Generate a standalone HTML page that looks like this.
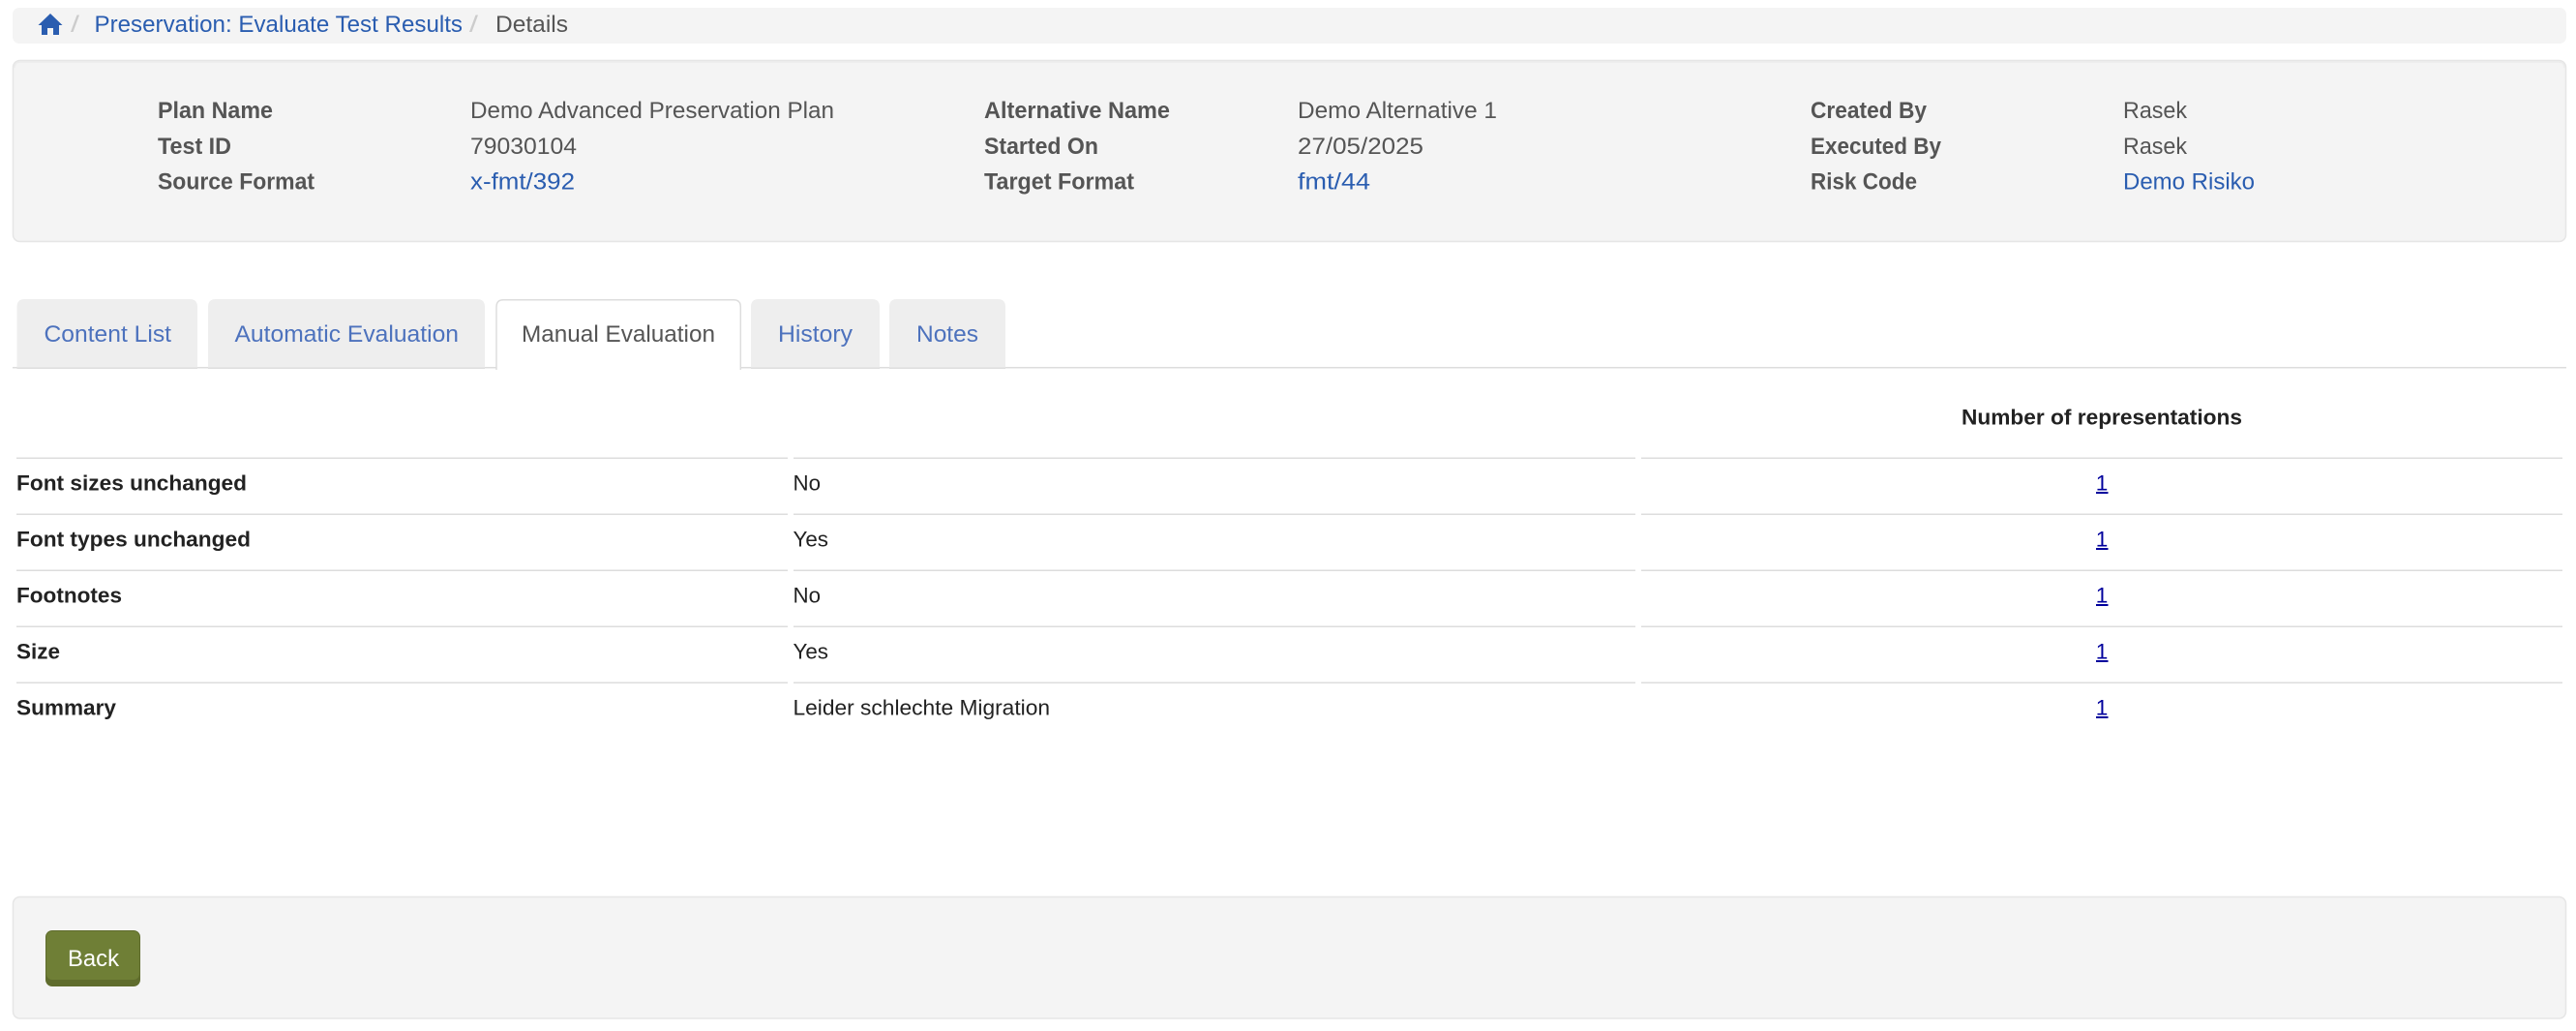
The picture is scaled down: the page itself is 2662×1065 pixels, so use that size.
<!DOCTYPE html>
<html lang="en">
<head>
<meta charset="utf-8">
<title>Details</title>
<style>
html,body{margin:0;padding:0;background:#fff;width:2662px;height:1065px;overflow:hidden}
svg{display:block;position:absolute;left:0;top:0}
text{font-family:"Liberation Sans",Arial,sans-serif;font-size:24.5px;white-space:pre}
.l{font-weight:700;fill:#555}
.v{fill:#555}
.a{fill:#2a5db0}
.t{fill:#4d72bd}
.th{font-size:22.6px;fill:#222;font-weight:700}
.td{font-size:22.6px;fill:#222}
.n{font-size:22.6px;fill:#00009c}
</style>
</head>
<body>
<svg width="2662" height="1065" viewBox="0 0 2662 1065" xmlns="http://www.w3.org/2000/svg">
<!-- breadcrumb -->
<rect x="13" y="8" width="2639" height="37" rx="7" fill="#f4f4f4"/>
<path d="M52 14 L64.5 26 L61 26 L61 36 L55 36 L55 29 L49 29 L49 36 L43 36 L43 26 L39.5 26 Z" fill="#2a5db0"/>
<text x="73" y="33" fill="#ccc" textLength="9" lengthAdjust="spacingAndGlyphs">/</text>
<text class="a" x="97.5" y="33" textLength="380.5" lengthAdjust="spacingAndGlyphs">Preservation: Evaluate Test Results</text>
<text x="485" y="33" fill="#ccc" textLength="9" lengthAdjust="spacingAndGlyphs">/</text>
<text class="v" x="512" y="33" textLength="75" lengthAdjust="spacingAndGlyphs">Details</text>

<!-- info panel -->
<rect x="13.5" y="62.5" width="2638" height="187" rx="7" fill="#f4f4f4" stroke="#e6e6e6" stroke-width="1.5"/>
<path d="M15 70 Q15 64 21 64 L2644 64 Q2650 64 2650 70" fill="none" stroke="#ececec" stroke-width="1.5"/>

<text class="l" x="163" y="122" textLength="119" lengthAdjust="spacingAndGlyphs">Plan Name</text>
<text class="l" x="163" y="159" textLength="76" lengthAdjust="spacingAndGlyphs">Test ID</text>
<text class="l" x="163" y="195.5" textLength="162" lengthAdjust="spacingAndGlyphs">Source Format</text>
<text class="v" x="486" y="122" textLength="376" lengthAdjust="spacingAndGlyphs">Demo Advanced Preservation Plan</text>
<text class="v" x="486" y="159" textLength="110" lengthAdjust="spacingAndGlyphs">79030104</text>
<text class="a" x="486" y="195.5" textLength="108" lengthAdjust="spacingAndGlyphs">x-fmt/392</text>

<text class="l" x="1017" y="122" textLength="192" lengthAdjust="spacingAndGlyphs">Alternative Name</text>
<text class="l" x="1017" y="159" textLength="118" lengthAdjust="spacingAndGlyphs">Started On</text>
<text class="l" x="1017" y="195.5" textLength="155" lengthAdjust="spacingAndGlyphs">Target Format</text>
<text class="v" x="1341" y="122" textLength="206" lengthAdjust="spacingAndGlyphs">Demo Alternative 1</text>
<text class="v" x="1341" y="159" textLength="130" lengthAdjust="spacingAndGlyphs">27/05/2025</text>
<text class="a" x="1341" y="195.5" textLength="75" lengthAdjust="spacingAndGlyphs">fmt/44</text>

<text class="l" x="1871" y="122" textLength="120" lengthAdjust="spacingAndGlyphs">Created By</text>
<text class="l" x="1871" y="159" textLength="135" lengthAdjust="spacingAndGlyphs">Executed By</text>
<text class="l" x="1871" y="195.5" textLength="110" lengthAdjust="spacingAndGlyphs">Risk Code</text>
<text class="v" x="2194" y="122" textLength="66" lengthAdjust="spacingAndGlyphs">Rasek</text>
<text class="v" x="2194" y="159" textLength="66" lengthAdjust="spacingAndGlyphs">Rasek</text>
<text class="a" x="2194" y="195.5" textLength="136" lengthAdjust="spacingAndGlyphs">Demo Risiko</text>

<!-- tabs -->
<rect x="13" y="379" width="2639" height="1.5" fill="#ddd"/>
<path d="M17.5 381 V317 Q17.5 309 25.5 309 H196 Q204 309 204 317 V381 Z" fill="#eee"/><rect x="17.5" y="379.5" width="186.5" height="1.5" fill="#ddd"/>
<path d="M215 381 V317 Q215 309 223 309 H493 Q501 309 501 317 V381 Z" fill="#eee"/><rect x="215" y="379.5" width="286" height="1.5" fill="#ddd"/>
<path d="M776 381 V317 Q776 309 784 309 H901 Q909 309 909 317 V381 Z" fill="#eee"/><rect x="776" y="379.5" width="133" height="1.5" fill="#ddd"/>
<path d="M919 381 V317 Q919 309 927 309 H1031 Q1039 309 1039 317 V381 Z" fill="#eee"/><rect x="919" y="379.5" width="120" height="1.5" fill="#ddd"/>
<path d="M513 382 V317 Q513 309.7 520.3 309.7 H758 Q765.3 309.7 765.3 317 V382" fill="#fff" stroke="#ddd" stroke-width="1.5"/>
<text class="t" x="45.5" y="353" textLength="131.5" lengthAdjust="spacingAndGlyphs">Content List</text>
<text class="t" x="242.5" y="353" textLength="231.5" lengthAdjust="spacingAndGlyphs">Automatic Evaluation</text>
<text class="v" x="539" y="353" textLength="200" lengthAdjust="spacingAndGlyphs">Manual Evaluation</text>
<text class="t" x="804" y="353" textLength="77" lengthAdjust="spacingAndGlyphs">History</text>
<text class="t" x="947" y="353" textLength="64" lengthAdjust="spacingAndGlyphs">Notes</text>

<!-- table -->
<text class="th" x="2027" y="438.5" textLength="290" lengthAdjust="spacingAndGlyphs">Number of representations</text>
<g fill="#ddd">
<rect x="17" y="472.5" width="797" height="1.5"/><rect x="820" y="472.5" width="870" height="1.5"/><rect x="1696" y="472.5" width="952" height="1.5"/>
<rect x="17" y="530.5" width="797" height="1.5"/><rect x="820" y="530.5" width="870" height="1.5"/><rect x="1696" y="530.5" width="952" height="1.5"/>
<rect x="17" y="588.5" width="797" height="1.5"/><rect x="820" y="588.5" width="870" height="1.5"/><rect x="1696" y="588.5" width="952" height="1.5"/>
<rect x="17" y="646.5" width="797" height="1.5"/><rect x="820" y="646.5" width="870" height="1.5"/><rect x="1696" y="646.5" width="952" height="1.5"/>
<rect x="17" y="704.5" width="797" height="1.5"/><rect x="820" y="704.5" width="870" height="1.5"/><rect x="1696" y="704.5" width="952" height="1.5"/>
</g>
<text class="th" x="17" y="506.5" textLength="238" lengthAdjust="spacingAndGlyphs">Font sizes unchanged</text>
<text class="th" x="17" y="564.5" textLength="242" lengthAdjust="spacingAndGlyphs">Font types unchanged</text>
<text class="th" x="17" y="622.5" textLength="109" lengthAdjust="spacingAndGlyphs">Footnotes</text>
<text class="th" x="17" y="680.5" textLength="45" lengthAdjust="spacingAndGlyphs">Size</text>
<text class="th" x="17" y="738.5" textLength="103" lengthAdjust="spacingAndGlyphs">Summary</text>
<text class="td" x="819.5" y="506.5" textLength="28.5" lengthAdjust="spacingAndGlyphs">No</text>
<text class="td" x="819.5" y="564.5" textLength="36.5" lengthAdjust="spacingAndGlyphs">Yes</text>
<text class="td" x="819.5" y="622.5" textLength="28.5" lengthAdjust="spacingAndGlyphs">No</text>
<text class="td" x="819.5" y="680.5" textLength="36.5" lengthAdjust="spacingAndGlyphs">Yes</text>
<text class="td" x="819.5" y="738.5" textLength="265.5" lengthAdjust="spacingAndGlyphs">Leider schlechte Migration</text>
<g class="ones">
<text class="n" x="2172" y="506.5" text-anchor="middle">1</text><rect x="2166" y="508" width="12.5" height="2" fill="#00009c"/>
<text class="n" x="2172" y="564.5" text-anchor="middle">1</text><rect x="2166" y="566" width="12.5" height="2" fill="#00009c"/>
<text class="n" x="2172" y="622.5" text-anchor="middle">1</text><rect x="2166" y="624" width="12.5" height="2" fill="#00009c"/>
<text class="n" x="2172" y="680.5" text-anchor="middle">1</text><rect x="2166" y="682" width="12.5" height="2" fill="#00009c"/>
<text class="n" x="2172" y="738.5" text-anchor="middle">1</text><rect x="2166" y="740" width="12.5" height="2" fill="#00009c"/>
</g>

<!-- footer panel -->
<rect x="13.5" y="926.5" width="2638" height="125.5" rx="7" fill="#f4f4f4" stroke="#e6e6e6" stroke-width="1.5"/>
<rect x="47" y="961" width="98" height="58" rx="7" fill="#5f6c2d"/>
<rect x="48" y="962" width="96" height="50" rx="6" fill="#6f7f36"/>
<text x="70" y="998" fill="#fff" textLength="53" lengthAdjust="spacingAndGlyphs">Back</text>
</svg>
</body>
</html>
